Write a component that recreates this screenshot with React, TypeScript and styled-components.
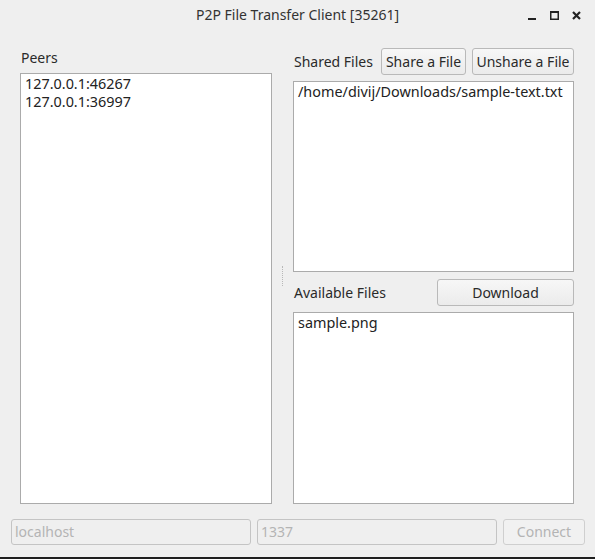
import React from 'react'
import styled, { createGlobalStyle } from 'styled-components'

const GlobalStyle = createGlobalStyle`
    html, body {
        margin: 0;
        padding: 0;
        background: #efefef;
    }
    body {
        font-family: 'Noto Sans', 'Open Sans', sans-serif;
        font-size: 14px;
        color: #2a2a2a;
    }
`

const Window = styled.div`
    width: 595px;
    height: 559px;
    box-sizing: border-box;
    background: #efefef;
    border-bottom: 2px solid #1f1f1f;
    display: flex;
    flex-direction: column;
`

const TitleBar = styled.div`
    height: 30px;
    flex-shrink: 0;
    position: relative;
    display: flex;
    align-items: center;
    justify-content: center;
`

const Title = styled.div`
    font-size: 14px;
    color: #333;
    padding-bottom: 2px;
`

const Controls = styled.div`
    position: absolute;
    right: 14px;
    top: 11px;
    display: flex;
    gap: 13px;
    align-items: center;
`

const Main = styled.div`
    margin-top: 18px;
    height: 456px;
    padding: 0 21px 0 20px;
    display: grid;
    grid-template-columns: 252px 21px 1fr;
`

const Column = styled.div`
    display: flex;
    flex-direction: column;
    min-height: 0;
`

const PeersLabel = styled.div`
    height: 20px;
    line-height: 20px;
    padding-left: 1px;
    margin-bottom: 5px;
`

const List = styled.div<{ height?: number }>`
    background: #fff;
    border: 1px solid #ababab;
    box-sizing: border-box;
    padding: 1px 4px;
    ${(p) => (p.height ? `height: ${p.height}px;` : 'flex: 1;')}
`

const Item = styled.div`
    height: 18px;
    line-height: 18px;
    font-size: 14.4px;
    color: #222;
    white-space: nowrap;
`

const Splitter = styled.div`
    display: flex;
    justify-content: center;
    align-items: center;
`

const Grip = styled.div`
    width: 0;
    height: 20px;
    border-left: 1px dotted #b8b8b8;
    margin-left: -1px;
`

const HeaderRow = styled.div<{ gap: number }>`
    height: 27px;
    display: flex;
    align-items: center;
    gap: ${(p) => p.gap}px;
`

const Label = styled.div`
    padding-left: 1px;
    flex: 1;
    white-space: nowrap;
`

const Button = styled.button<{ w: number }>`
    width: ${(p) => p.w}px;
    height: 27px;
    box-sizing: border-box;
    border: 1px solid #b9b9b9;
    border-radius: 3px;
    background: linear-gradient(#f7f7f7, #ebebeb);
    font-family: inherit;
    font-size: 14px;
    color: #2a2a2a;
    padding: 0;
    white-space: nowrap;
`

const Gap = styled.div<{ h: number }>`
    height: ${(p) => p.h}px;
    flex-shrink: 0;
`

const BottomRow = styled.div`
    margin-top: 15px;
    padding: 0 10px 0 11px;
    display: grid;
    grid-template-columns: 240px 240px 1fr;
    gap: 6px;
    height: 26px;
`

const Field = styled.div`
    box-sizing: border-box;
    border: 1px solid #c4c4c4;
    border-radius: 3px;
    background: #efefef;
    color: #b4b4b4;
    padding: 0 3px;
    line-height: 24px;
`

const DisabledButton = styled.div`
    box-sizing: border-box;
    border: 1px solid #cfcfcf;
    border-radius: 3px;
    background: #f1f1f1;
    color: #b4b4b4;
    text-align: center;
    line-height: 24px;
`

export default function App() {
    return (
        <>
            <GlobalStyle />
            <Window>
                <TitleBar>
                    <Title>P2P File Transfer Client [35261]</Title>
                    <Controls>
                        <svg width="9" height="9" viewBox="0 0 9 9">
                            <rect x="0" y="7" width="8" height="2" fill="#222" />
                        </svg>
                        <svg width="9" height="9" viewBox="0 0 9 9">
                            <rect x="0.75" y="0.75" width="7.5" height="7.5" fill="none" stroke="#222" strokeWidth="1.5" />
                            <rect x="0" y="0" width="9" height="2" fill="#222" />
                        </svg>
                        <svg width="9" height="9" viewBox="0 0 9 9">
                            <path d="M1 1 L8 8 M8 1 L1 8" stroke="#222" strokeWidth="2.2" />
                        </svg>
                    </Controls>
                </TitleBar>
                <Main>
                    <Column>
                        <PeersLabel>Peers</PeersLabel>
                        <List>
                            <Item>127.0.0.1:46267</Item>
                            <Item>127.0.0.1:36997</Item>
                        </List>
                    </Column>
                    <Splitter>
                        <Grip />
                    </Splitter>
                    <Column>
                        <HeaderRow gap={6}>
                            <Label>Shared Files</Label>
                            <Button w={85}>Share a File</Button>
                            <Button w={102}>Unshare a File</Button>
                        </HeaderRow>
                        <Gap h={6} />
                        <List height={191}>
                            <Item>/home/divij/Downloads/sample-text.txt</Item>
                        </List>
                        <Gap h={7} />
                        <HeaderRow gap={0}>
                            <Label>Available Files</Label>
                            <Button w={137}>Download</Button>
                        </HeaderRow>
                        <Gap h={6} />
                        <List>
                            <Item>sample.png</Item>
                        </List>
                    </Column>
                </Main>
                <BottomRow>
                    <Field>localhost</Field>
                    <Field>1337</Field>
                    <DisabledButton>Connect</DisabledButton>
                </BottomRow>
            </Window>
        </>
    )
}
